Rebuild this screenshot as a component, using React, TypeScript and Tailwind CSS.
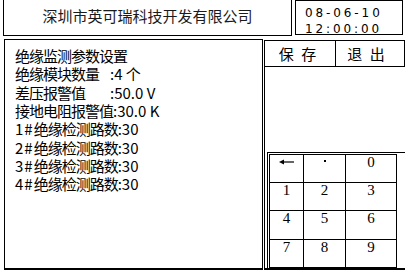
import React from "react";

const cjk = { fontFamily: '"Noto Sans CJK SC", "Noto Sans", sans-serif' };

function Line({ pre, label, value, labelW }: { pre?: string; label: string; value?: string; labelW?: string }) {
  return (
    <div className="flex h-[18.33px] leading-[18px] items-center whitespace-pre">
      {pre && <span className="tracking-[1px]">{pre}</span>}
      <span className={"tracking-[-1px] " + (labelW ?? "")}>{label}</span>
      {value !== undefined && <span className="tracking-[0px]">{value}</span>}
    </div>
  );
}

function Arrow() {
  return (
    <svg width="16" height="6" viewBox="0 0 16 6">
      <line x1="3" y1="3" x2="15" y2="3" stroke="black" strokeWidth="1.2" />
      <polygon points="0,3 5,0.5 5,5.5" fill="black" />
    </svg>
  );
}

export default function App() {
  const keys: React.ReactNode[] = [
    <Arrow key="a" />,
    <div key="d" className="w-[2px] h-[2px] bg-black mt-[4px]" />,
    "0",
    "1",
    "2",
    "3",
    "4",
    "5",
    "6",
    "7",
    "8",
    "9",
  ];
  const rowH = ["h-[28px]", "h-[28px]", "h-[29px]", "h-[28px]"];
  return (
    <div className="w-[406px] h-[273px] bg-white overflow-hidden text-black" style={cjk}>
      {/* header */}
      <div className="flex h-[36px] items-start">
        <div className="ml-[3px] w-[289px] h-[36px] border-l border-r border-b border-black flex items-center justify-center pb-[4px] text-[15px] leading-[18px] text-[#1a1a1a]">
          深圳市英可瑞科技开发有限公司
        </div>
        <div
          className="ml-[3px] w-[108px] h-[35px] border border-black pl-[9px] pt-[4px] text-[12px] leading-[16px] tracking-[2.9px]"
          style={{ fontFamily: '"DejaVu Sans", sans-serif' }}
        >
          <div>08-06-10</div>
          <div>12:00:00</div>
        </div>
      </div>
      {/* body */}
      <div className="flex mt-[3px] items-start">
        <div className="ml-[4px] w-[259px] h-[231px] border border-b-2 border-black pl-[10px] pt-[7px] text-[15px]">
          <Line label="绝缘监测参数设置" />
          <Line label="绝缘模块数量" value=":4 个" labelW="inline-block w-[95px]" />
          <Line label="差压报警值" value=":50.0 V" labelW="inline-block w-[95px]" />
          <Line label="接地电阻报警值" value=":30.0 K" />
          <Line pre="1#" label="绝缘检测路数" value=":30" />
          <Line pre="2#" label="绝缘检测路数" value=":30" />
          <Line pre="3#" label="绝缘检测路数" value=":30" />
          <Line pre="4#" label="绝缘检测路数" value=":30" />
        </div>
        <div className="ml-[1px] mt-[1px] w-[141px] h-[230px] border-l border-t border-b-2 border-black flex flex-col">
          <div className="flex h-[26px] border-b border-r border-black text-[15px] leading-[18px]">
            <div className="w-[71px] border-r border-black flex items-center justify-center pr-[3px] whitespace-pre tracking-[2px]">
              保 存
            </div>
            <div className="flex-1 flex items-center justify-center pr-[6px] whitespace-pre tracking-[2px]">退 出</div>
          </div>
          <div className="flex-1" />
          <div className="ml-[2px] border-l border-t border-black pl-[1px] pt-[1px]">
            <div
              className="grid grid-cols-[34px_42px_51px] w-[128px] border-l border-t border-black text-[15px]"
              style={{ fontFamily: '"Liberation Serif", serif' }}
            >
              {keys.map((k, i) => (
                <div
                  key={i}
                  className={
                    "border-r border-b border-black flex justify-center items-start pt-[1px] leading-[12px] " +
                    rowH[Math.floor(i / 3)]
                  }
                >
                  {i === 0 ? <div className="mt-[3px]">{k}</div> : k}
                </div>
              ))}
            </div>
          </div>
        </div>
      </div>
    </div>
  );
}
